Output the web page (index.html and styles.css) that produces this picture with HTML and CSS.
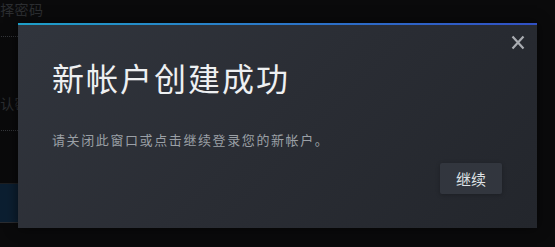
FILE: index.html
```html
<!DOCTYPE html>
<html lang="zh-CN">
<head>
    <meta charset="UTF-8">
    <title>新帐户创建成功</title>
    <link rel="stylesheet" href="styles.css">
</head>
<body>

<!-- Formulario detrás del modal -->
<div class="page">
    <div class="field">
        <label>选择密码</label>
        <div class="input"></div>
    </div>
    <div class="field">
        <label>确认密码</label>
        <div class="input"></div>
    </div>
    <div class="submit"></div>
</div>

<!-- Modal -->
<div class="modal">
    <button class="modal-close" aria-label="关闭">
        <svg width="14" height="15" viewBox="0 0 14 15">
            <path d="M1.5 1.5 L12.5 13.5 M12.5 1.5 L1.5 13.5" stroke="#a9acb1" stroke-width="2.2" fill="none"/>
        </svg>
    </button>
    <h1 class="modal-title">新帐户创建成功</h1>
    <p class="modal-text">请关闭此窗口或点击继续登录您的新帐户。</p>
    <div class="modal-actions">
        <button class="btn">继续</button>
    </div>
</div>

</body>
</html>
```

FILE: styles.css
```css
body {
    margin: 0;
    width: 555px;
    height: 247px;
    overflow: hidden;
    position: relative;
    background-color: #0a0a0b;
    font-family: "Noto Sans CJK SC", "Noto Sans", sans-serif;
}

/* Formulario detrás */
.page {
    margin-left: -14px;
    padding-top: 1px;
    width: 300px;
}
.field label {
    display: block;
    font-size: 14px;
    line-height: 16px;
    color: #2b2d30;
    letter-spacing: 0.3px;
}
.field .input {
    height: 19px;
    border-bottom: 1px dotted #34363a;
    margin-bottom: 81px;
}
.field + .field label {
    margin-top: -23px;
}
.field + .field .input {
    margin-bottom: 53px;
}
.submit {
    height: 38px;
    background-color: #0c1f31;
    border-top: 1px solid #1d1f22;
    border-bottom: 1px solid #2a2c30;
    margin-top: -1px;
}

/* Modal */
.modal {
    position: absolute;
    left: 18px;
    top: 23px;
    width: 519px;
    height: 205px;
    box-sizing: border-box;
    border-top: 2px solid #1f9fc6;
    border-image: linear-gradient(90deg, #1e9fc8 0%, #2a7bc8 45%, #3150c4 100%) 1;
    background: linear-gradient(135deg, #31353d 0%, #2a2d34 50%, #23262c 100%);
    padding: 30px 34px 0;
    box-shadow: 0 0 12px rgba(0, 0, 0, 0.6);
}
.modal-close {
    position: absolute;
    top: 10px;
    right: 12px;
    background: none;
    border: none;
    padding: 0;
    cursor: pointer;
}
.modal-close svg {
    display: block;
}
.modal-title {
    margin: 0;
    font-size: 32px;
    font-weight: 400;
    line-height: 44px;
    letter-spacing: 2px;
    color: #eef0f2;
}
.modal-text {
    margin: 32px 0 0;
    font-size: 13px;
    line-height: 18px;
    letter-spacing: 1.6px;
    color: #9ba0a6;
}
.modal-actions {
    display: flex;
    justify-content: flex-end;
    margin-top: 14px;
    padding-right: 1px;
}
.btn {
    font-family: "Noto Sans CJK SC", "Noto Sans", sans-serif;
    font-size: 15px;
    color: #dfe2e5;
    background-color: #32363e;
    border: none;
    border-radius: 2px;
    height: 31px;
    padding: 0 16px;
    box-shadow: 0 1px 4px rgba(0, 0, 0, 0.25);
    cursor: pointer;
}
```
